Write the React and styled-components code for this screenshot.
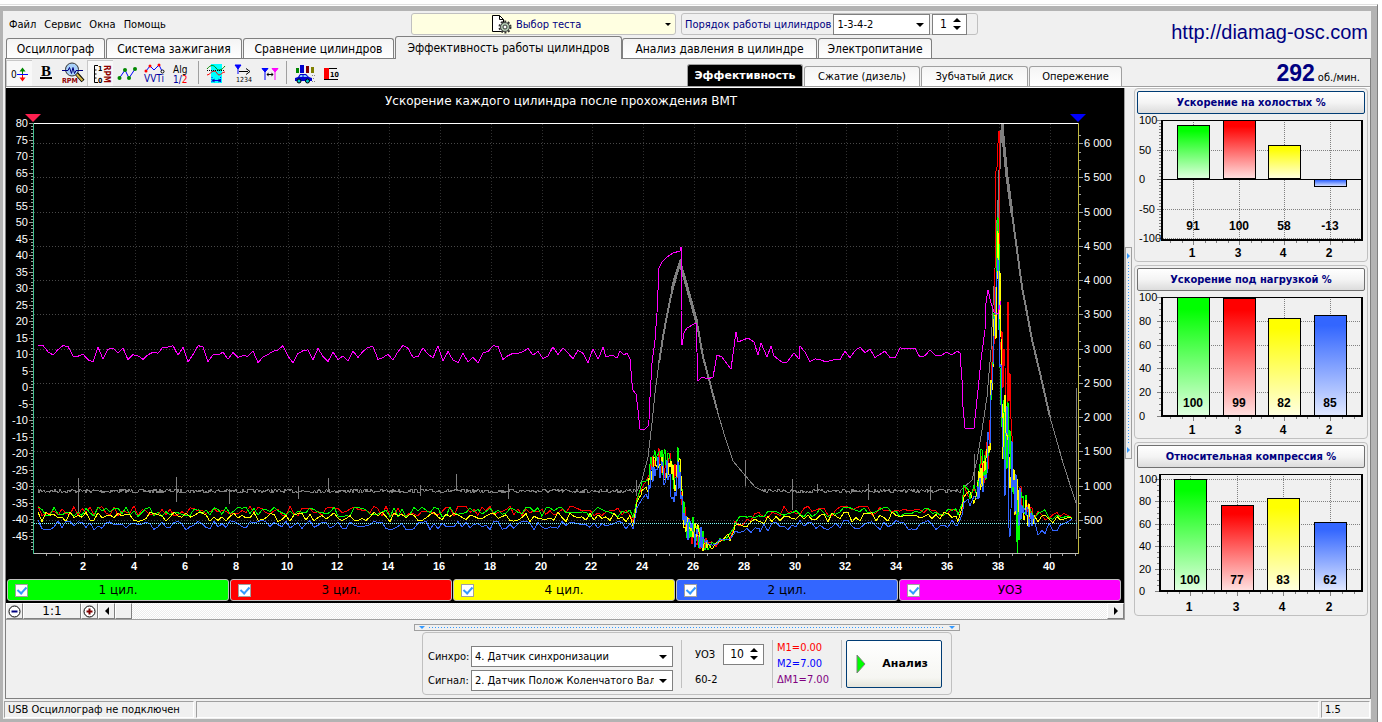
import React, { useState } from 'react';
import styled, { createGlobalStyle } from 'styled-components';

const UI_FONT = '"DejaVu Sans Condensed", "DejaVu Sans", sans-serif';
const WIDE_FONT = '"DejaVu Sans", Verdana, sans-serif';
const ARIAL = '"Liberation Sans", Arial, sans-serif';
const NAVY = '#000080';

const GREEN = '#00ff00';
const RED = '#ff0000';
const YELLOW = '#ffff00';
const BLUE = '#3366ff';
const MAGENTA = '#ff00ff';

const MENU = ['Файл', 'Сервис', 'Окна', 'Помощь'];

const TABS = [
  { label: 'Осциллограф', width: 99 },
  { label: 'Система зажигания', width: 136 },
  { label: 'Сравнение цилиндров', width: 151 },
  { label: 'Эффективность работы цилиндров', width: 227 },
  { label: 'Анализ давления в цилиндре', width: 195 },
  { label: 'Электропитание', width: 114 },
];

const SUB_TABS = [
  { label: 'Эффективность', width: 116 },
  { label: 'Сжатие (дизель)', width: 116 },
  { label: 'Зубчатый диск', width: 107 },
  { label: 'Опережение', width: 93 },
];

const CHANNELS = [
  { label: '1 цил.', color: GREEN },
  { label: '3 цил.', color: RED },
  { label: '4 цил.', color: YELLOW },
  { label: '2 цил.', color: BLUE },
  { label: 'УОЗ', color: MAGENTA },
];

const BAR_COLORS = ['green', 'red', 'yellow', 'blue'];
const CYLINDERS = [1, 3, 4, 2];

const BAR_CHARTS = [
  {
    title: 'Ускорение на холостых %',
    focused: true,
    values: [91, 100, 58, -13],
    centers: [56, 102, 147, 193],
    left: 24,
    top: 6,
    bottom: 126,
    y100: 6,
    y0: 65,
    ticks: [100, 50, 0, -50, -100],
  },
  {
    title: 'Ускорение под нагрузкой %',
    values: [100, 99, 82, 85],
    centers: [56, 102, 147, 193],
    left: 24,
    top: 6,
    bottom: 125,
    y100: 6,
    y0: 125,
    ticks: [100, 80, 60, 40, 20, 0],
  },
  {
    title: 'Относительная компрессия %',
    values: [100, 77, 83, 62],
    centers: [53, 100, 146, 193],
    left: 22,
    top: 6,
    bottom: 123,
    y100: 11,
    y0: 123,
    ticks: [100, 80, 60, 40, 20, 0],
  },
];

const GlobalStyle = createGlobalStyle`
  * {
    box-sizing: border-box;
  }
  body {
    margin: 0;
    background: #fff;
    font-family: ${UI_FONT};
    font-size: 11px;
    color: #000;
  }
  button, input, select {
    font: inherit;
    color: inherit;
    margin: 0;
    padding: 0;
  }
`;

const Page = styled.div`
  display: flex;
  flex-direction: column;
  min-height: 100vh;
  padding: 4px 4px 0 0;
`;

const Frame = styled.div`
  display: flex;
  flex-direction: column;
  flex: 1;
  margin-top: 1px;
  border-style: solid;
  border-width: 5px 6px 3px 3px;
  border-color: #b3b3b3;
  background: #f0f0f0;
`;

const Outline = styled.div`
  display: flex;
  flex-direction: column;
  flex: 1;
  border-top: 1px solid #e0e0e0;
  border-right: 1px solid #808080;
`;

const Header = styled.header`
  display: flex;
  justify-content: space-between;
  padding-left: 3px;
`;

const TopRow = styled.div`
  display: flex;
  height: 25px;
  padding-top: 2px;
`;

const MenuBar = styled.nav`
  display: flex;
  width: 405px;
  gap: 8px;
  padding-left: 3px;
`;

const MenuItem = styled.button`
  border: 0;
  background: none;
`;

const TestButton = styled.button`
  display: flex;
  align-items: center;
  width: 265px;
  height: 22px;
  padding: 0 4px 0 79px;
  border: 1px solid #c0c0c0;
  border-radius: 3px;
  background: #ffffe1;
  color: ${NAVY};
  gap: 3px;
`;

const Grow = styled.span`
  flex: 1;
  text-align: left;
`;

const OrderGroup = styled.div`
  display: flex;
  align-items: center;
  width: 297px;
  height: 22px;
  margin-left: 5px;
  padding-left: 3px;
  gap: 2px;
  border: 1px solid #c0c0c0;
  border-radius: 3px;
  color: ${NAVY};
`;

const SelectWrap = styled.div`
  position: relative;
  width: ${p => p.$width}px;
  color: #000;
  svg {
    position: absolute;
    right: 6px;
    top: 9px;
    pointer-events: none;
  }
`;

const Select = styled.select`
  display: block;
  appearance: none;
  width: 100%;
  height: 21px;
  padding: 0 18px 0 3px;
  border: 1px solid #808080;
  border-radius: 0;
  background: #fff;
  outline: 0;
  text-overflow: clip;
`;

const SpinBox = styled.div`
  display: flex;
  align-items: center;
  width: ${p => p.$width}px;
  height: 21px;
  padding-right: 5px;
  border: 1px solid #808080;
  background: #fff;
  color: #000;
`;

const SpinInput = styled.input`
  flex: 1;
  min-width: 0;
  border: 0;
  outline: 0;
  background: none;
  font-size: 12px;
  text-align: center;
`;

const SpinArrows = styled.div`
  display: flex;
  flex-direction: column;
  gap: 3px;
`;

const ArrowButton = styled.button`
  display: block;
  height: 5px;
  border: 0;
  background: none;
  line-height: 0;
`;

const SiteLink = styled.a`
  padding: 8px 3px 0 0;
  color: ${NAVY};
  font: 20px/26px ${ARIAL};
  text-decoration: none;
`;

const TabRow = styled.div`
  display: flex;
  align-items: flex-end;
  height: 22px;
`;

const Tab = styled.button`
  width: ${p => p.$width}px;
  height: ${p => (p.$active ? 23 : 20)}px;
  margin: ${p => (p.$active ? '0 0 -1px' : '0 1px 0 0')};
  border: 1px solid #808080;
  border-bottom: 0;
  border-radius: 3px 3px 0 0;
  background: ${p => (p.$active ? '#f0f0f0' : 'linear-gradient(#f4f4f4, #fff)')};
  font-family: ${UI_FONT};
  font-size: 12px;
  white-space: nowrap;
  z-index: ${p => (p.$active ? 1 : 0)};
`;

const Workspace = styled.main`
  display: flex;
  flex-direction: column;
  flex: 1;
  margin-left: 2px;
  border: 1px solid #808080;
`;

const Toolbar = styled.div`
  display: flex;
  align-items: stretch;
  height: 29px;
  border-bottom: 1px solid #fff;
  box-shadow: inset 0 -1px #a0a0a0;
`;

const ToolButton = styled.button`
  display: flex;
  align-items: center;
  justify-content: center;
  width: ${p => (p.$pressed ? 26 : 27)}px;
  height: 26px;
  margin: 1px ${p => (p.$pressed ? 1 : 0)}px 0 0;
  border: 0;
  border-top: 1px solid ${p => (p.$pressed ? '#c8c8c8' : 'transparent')};
  border-left: 1px solid ${p => (p.$pressed ? '#c8c8c8' : 'transparent')};
  background: ${p => (p.$pressed ? '#f8f8f8' : 'none')};
`;

const ToolSeparator = styled.span`
  width: 1px;
  height: 23px;
  margin: 2px 3px;
  background: #a0a0a0;
`;

const SubTabs = styled.div`
  display: flex;
  align-items: flex-end;
  gap: 1px;
  margin-left: auto;
  padding-bottom: 1px;
`;

const SubTab = styled.button`
  width: ${p => p.$width}px;
  height: ${p => (p.$active ? 22 : 20)}px;
  border: 1px solid #a0a0a0;
  border-bottom: 0;
  border-radius: 3px 3px 0 0;
  background: ${p => (p.$active ? '#000' : 'linear-gradient(#f4f4f4, #fff)')};
  color: ${p => (p.$active ? '#fff' : '#000')};
  font-family: ${p => (p.$active ? WIDE_FONT : UI_FONT)};
  font-weight: ${p => (p.$active ? 700 : 400)};
`;

const Rpm = styled.div`
  display: flex;
  align-items: baseline;
  justify-content: flex-end;
  gap: 3px;
  width: 248px;
  padding-right: 10px;
  line-height: 28px;
`;

const RpmValue = styled.strong`
  color: ${NAVY};
  font-family: ${ARIAL};
  font-size: 23px;
`;

const Body = styled.div`
  display: grid;
  grid-template-columns: minmax(0, 1fr) 9px 234px;
  padding-right: 2px;
`;

const Scope = styled.section`
  border-right: 1px solid #a0a0a0;
  border-bottom: 1px solid #a0a0a0;
  background: #000;
`;

const ChartSvg = styled.svg`
  display: block;
  width: 100%;
  height: auto;
`;

const Channels = styled.div`
  display: grid;
  grid-template-columns: repeat(5, 1fr);
  gap: 1px;
  height: 24px;
  padding: 0 3px 2px 1px;
`;

const Channel = styled.label`
  display: grid;
  grid-template-columns: 13px 1fr 13px;
  align-items: center;
  padding: 0 7px;
  border: 1px solid #c0c0c0;
  border-radius: 3px;
  background: ${p => p.$color};
  font: 12px ${WIDE_FONT};
  text-align: center;
`;

const Check = styled.input`
  appearance: none;
  display: grid;
  place-items: center;
  width: 13px;
  height: 13px;
  border: 1px solid #a0a0a0;
  background: #fff;
  &:checked::before {
    content: '';
    width: 4px;
    height: 7px;
    margin-top: -2px;
    border: solid #3399ff;
    border-width: 0 2px 2px 0;
    transform: rotate(42deg);
  }
`;

const ScrollRow = styled.div`
  display: flex;
  height: 16px;
  background: #f0f0f0;
`;

const ScrollButton = styled.button`
  display: flex;
  align-items: center;
  justify-content: center;
  width: ${p => p.$width}px;
  border: 1px solid;
  border-color: #fff #808080 #808080 #fff;
  background: #f0f0f0;
  font: 12px/14px ${WIDE_FONT};
`;

const Track = styled.div`
  flex: 1;
  background: repeating-conic-gradient(#fff 0 25%, #ececec 0 50%) 0 0 / 2px 2px;
`;

const SideHandle = styled.div`
  display: flex;
  flex-direction: column;
  align-items: center;
  justify-content: space-between;
  width: 7px;
  height: 212px;
  margin-top: 159px;
  padding: 5px 0;
  border: 1px solid #a0a0a0;
`;

const SideDots = styled.span`
  flex: 1;
  width: 1px;
  margin: 3px 0;
  background: repeating-linear-gradient(#3399ff 0 1px, transparent 1px 3px);
`;

const SideColumn = styled.aside`
  display: flex;
  flex-direction: column;
  gap: 3px;
`;

const BarPanel = styled.section`
  height: 174px;
  padding: 2px;
  border: 1px solid #c0c0c0;
  border-radius: 4px;
`;

const BarTitle = styled.button`
  display: block;
  width: 100%;
  height: 23px;
  border: 1px solid ${p => (p.$focused ? '#003c74' : '#707070')};
  border-radius: 2px;
  background: linear-gradient(#fff, #f4f4f4 50%, #dcdcdc);
  color: ${NAVY};
  font-weight: 700;
`;

const Bottom = styled.section`
  display: flex;
  flex-direction: column;
  align-items: center;
  flex: 1;
  gap: 1px;
  padding: 4px 2px 3px 0;
`;

const BottomHandle = styled.div`
  display: flex;
  align-items: center;
  width: 546px;
  height: 7px;
  padding: 0 4px;
  border: 1px solid #a0a0a0;
`;

const BottomDots = styled.span`
  flex: 1;
  height: 1px;
  margin: 0 4px;
  background: repeating-linear-gradient(90deg, #3399ff 0 1px, transparent 1px 3px);
`;

const Controls = styled.div`
  display: flex;
  align-items: center;
  height: 63px;
  padding: 0 9px 0 5px;
  border: 1px solid #c0c0c0;
  border-radius: 4px;
`;

const Sources = styled.div`
  display: grid;
  grid-template-columns: 43px 202px;
  row-gap: 3px;
  align-items: center;
  padding-top: 9px;
`;

const Divider = styled.span`
  width: 1px;
  height: 48px;
  margin: 0 ${p => p.$after}px 0 8px;
  background: #c0c0c0;
`;

const Advance = styled.div`
  display: grid;
  grid-template-columns: 28px 41px;
  grid-auto-rows: 21px;
  row-gap: 4px;
  align-items: center;
  padding-top: 6px;
`;

const Markers = styled.div`
  width: 56px;
  line-height: 16px;
`;

const Marker = styled.div`
  color: ${p => p.$color};
`;

const AnalyzeButton = styled.button`
  display: flex;
  align-items: center;
  justify-content: space-between;
  width: 96px;
  height: 48px;
  padding: 0 13px 0 9px;
  border: 1px solid #003c74;
  border-radius: 2px;
  background: linear-gradient(#fff, #f6f6f2 80%, #e4e4da);
  font-family: ${WIDE_FONT};
  font-weight: 700;
`;

const StatusBar = styled.footer`
  display: flex;
  gap: 2px;
  height: 20px;
  padding: 2px 1px 1px;
`;

const StatusCell = styled.div`
  flex: ${p => (p.$width ? `0 0 ${p.$width}px` : 1)};
  padding-left: 3px;
  border: 1px solid;
  border-color: #a0a0a0 #fff #fff #a0a0a0;
  line-height: 15px;
`;

const Triangle = ({ dir, size = 4, color = '#000' }) => {
  const s = size;
  const shapes = {
    up: [2 * s, s, `0,${s} ${s},0 ${2 * s},${s}`],
    down: [2 * s, s, `0,0 ${2 * s},0 ${s},${s}`],
    left: [s, 2 * s, `${s},0 0,${s} ${s},${2 * s}`],
    right: [s, 2 * s, `0,0 ${s},${s} 0,${2 * s}`],
  };
  const [w, h, points] = shapes[dir];
  return <svg width={w} height={h} aria-hidden="true"><polygon points={points} fill={color} /></svg>;
};

const Spin = ({ label, width, initial }) => {
  const [value, setValue] = useState(initial);
  return <SpinBox $width={width}>
    <SpinInput aria-label={label} value={value} onChange={e => setValue(Number(e.target.value) || 0)} />
    <SpinArrows>
      <ArrowButton aria-label={`${label} +`} onClick={() => setValue(value + 1)}><Triangle dir="up" /></ArrowButton>
      <ArrowButton aria-label={`${label} -`} onClick={() => setValue(value - 1)}><Triangle dir="down" /></ArrowButton>
    </SpinArrows>
  </SpinBox>;
};

const DropDown = ({ id, width, options }) => <SelectWrap $width={width}>
  <Select id={id}>
    {options.map(o => <option key={o}>{o}</option>)}
  </Select>
  <Triangle dir="down" />
</SelectWrap>;

/* toolbar drawings, each on a 24x24 canvas */
const ICONS = {
  zero: <>
    <text x="3" y="16" fontSize="10">0</text>
    <path d="M9 12.500h11" stroke="#00f" />
    <path d="M14.500 12V8" stroke="#080" /><path d="M11.500 9.500l3-4 3 4z" fill="#080" />
    <path d="M14.500 13v4" stroke="#f00" /><path d="M11.500 15.500l3 4 3-4z" fill="#f00" />
  </>,
  bold: <>
    <text x="11" y="14" fontSize="15" fontWeight="700" textAnchor="middle" fontFamily="Liberation Serif, serif">B</text>
    <path d="M5 16h12" stroke="#000" strokeWidth="2" />
  </>,
  zoomRpm: <>
    <path d="M14 11l7 8" stroke="#000" strokeWidth="4" />
    <path d="M14.500 12l6 6.500" stroke="#d8b848" strokeWidth="2" />
    <circle cx="10" cy="7.500" r="6.500" fill="#a8d0f8" stroke="#333" />
    <path d="M0 8.500h6l1.500-3 2 6 1.500-6 1.500 6 1.500-3H21" stroke="#000080" fill="none" />
    <text x="0" y="21" fontSize="7" fill="#900000" fontWeight="700">RPM</text>
  </>,
  rpmAxis: <>
    <path d="M9 3.500H5.500v17H9M5.500 8h2M5.500 12h2M5.500 16h2" stroke="#000" fill="none" />
    <text x="9" y="9" fontSize="7" fontWeight="700">1</text>
    <text x="9" y="21" fontSize="7" fontWeight="700">0</text>
    <text x="3" y="-15" fontSize="8" fill="#900000" fontWeight="700" transform="rotate(90)">RPM</text>
  </>,
  points: <>
    <path d="M3.500 16L9 8l4 8 6-9" stroke="#00f" fill="none" />
    {[[3.5, 16], [9, 8], [13, 16], [19, 7]].map(([x, y]) => <circle key={x} cx={x} cy={y} r="2" fill="#080" />)}
  </>,
  vvti: <>
    <path d="M3 9l4-5 4 4 5-5 3 6" stroke="#00f" fill="none" />
    <circle cx="3" cy="9" r="1.500" fill="#f00" /><circle cx="7" cy="4" r="1.500" fill="#f00" />
    <circle cx="16" cy="3" r="1.500" fill="#f00" /><circle cx="19.500" cy="9.500" r="1.500" fill="#fff" stroke="#000" />
    <text x="1" y="20" fontSize="10" fill="#0000a0">VVTi</text>
  </>,
  alg: <>
    <text x="3" y="11" fontSize="10">Alg</text>
    <text x="3" y="21" fontSize="10" fill="#0000a0">1/<tspan fill="#f00">2</tspan></text>
  </>,
  overlap: <>
    <rect x="7" y="2" width="11" height="19" fill="#0ff" />
    <path d="M3 7c4-5 7-4 9-1s5 3 9-2" stroke="#080" fill="none" />
    <path d="M3 13c3 0 4-4 7-4s3 4 5 4 3-3 6-3" stroke="#f00" fill="none" />
    <path d="M3 8.500h18" stroke="#000" strokeDasharray="1 1" />
    <path d="M8 15v6M16.500 15v6" stroke="#00f" strokeDasharray="1 1" />
    <path d="M8.500 18.500h8" stroke="#00f" /><path d="M8 18.500l2.500-2v4zM17 18.500l-2.500-2v4z" fill="#00a" />
  </>,
  markCount: <>
    <path d="M4 3h6L7 7z" fill="#00f" stroke="#00f" /><path d="M7 5v7" stroke="#00f" />
    <path d="M8 9.500h9" stroke="#000" /><path d="M15 6.500l4 3-4 3" stroke="#000" fill="none" />
    <text x="5" y="20" fontSize="7">1234</text>
  </>,
  markPair: <>
    <path d="M4 6.500h6L7 10z" fill="#00f" stroke="#00f" /><path d="M7 7v11" stroke="#00f" />
    <path d="M14 6.500h6L17 10z" fill="#f0f" stroke="#f0f" /><path d="M17 7v11" stroke="#f0f" />
    <path d="M9 12.500h6" stroke="#000" /><path d="M8.500 12.500l2-2v4zM15.500 12.500l-2-2v4z" fill="#000" />
  </>,
  car: <>
    <rect x="4" y="6" width="3" height="5" fill="#080" /><rect x="8" y="3" width="4" height="8" fill="#00c" />
    <rect x="14" y="4" width="3" height="7" fill="#800000" /><rect x="19" y="5" width="3" height="6" fill="#808000" />
    <path d="M3 16l3-1 2-3h6l3 3 3 1v3H3z" fill="#0000d0" />
    <path d="M8.500 13h2v2h-3zM11.500 13h2l2 2h-4z" fill="#8cf" />
    <circle cx="7" cy="19" r="2" fill="#0cc" stroke="#000" /><circle cx="15.500" cy="19" r="2" fill="#0cc" stroke="#000" />
    <path d="M20 13.500h3M21 16.500h2M20 19.500h3" stroke="#888" strokeDasharray="1 1" />
  </>,
  ten: <>
    <path d="M5 6.500h13M5 17.500h14" stroke="#000" />
    <rect x="5" y="6" width="5" height="11" fill="#f00" />
    <text x="11" y="15" fontSize="7" fontWeight="700">10</text>
  </>,
};

const TOOLS = [
  ['zero', 'Нулевая линия', true], ['bold', 'Толщина линии'], ['zoomRpm', 'Масштаб RPM'], ['rpmAxis', 'Ось RPM', true],
  ['points', 'Точки'], ['vvti', 'VVTi'], ['alg', 'Алгоритм'], null,
  ['overlap', 'Наложение'], ['markCount', 'Счёт меток'], ['markPair', 'Метки'], null,
  ['car', 'Автомобиль'], ['ten', 'Десять'],
];

const TestIcon = () => <svg width="22" height="20" viewBox="0 0 22 20" aria-hidden="true">
  <path d="M1.500 1.500h7l4 4v12h-11z" fill="#fff" stroke="#000" />
  <path d="M8.500 1.500v4h4" fill="none" stroke="#000" />
  <circle cx="14" cy="13" r="5.500" fill="none" stroke="#333" strokeWidth="2" strokeDasharray="2 1.500" />
  <circle cx="14" cy="13" r="4.500" fill="#b0c8b0" stroke="#444" />
  <circle cx="14" cy="13" r="2" fill="#fff" stroke="#333" />
</svg>;

const makeRandom = seed => {
  let s = seed;
  return () => {
    s = (s * 16807) % 2147483647;
    return s / 2147483647;
  };
};

/* walks along [x, y, spread] nodes and jitters every sample inside the spread */
const trace = (nodes, seed, step = 4) => {
  const random = makeRandom(seed);
  const out = [];
  for (let i = 0; i < nodes.length - 1; i++) {
    const [x0, y0, a0] = nodes[i];
    const [x1, y1, a1] = nodes[i + 1];
    const d = a0 > 9 || a1 > 9 ? 1 : step;
    for (let x = x0; x < x1; x += d) {
      const k = (x - x0) / (x1 - x0);
      const y = y0 + (y1 - y0) * k + (random() * 2 - 1) * (a0 + (a1 - a0) * k);
      out.push(`${x.toFixed(1)},${Math.min(552, Math.max(124, y)).toFixed(1)}`);
    }
  }
  return out.join(' ');
};

const cylinderNodes = (base, shift, peak, late) => [
  [38, base, 5], [630, base, 5], [633, 522 + shift, 4], [637, 500 + shift, 4], [642, 488 + shift, 4],
  [648, 484 + shift, 8], [651, 470 + shift, 12], [658, 458 + shift, 12], [663, 465 + shift, 14], [669, 466 + shift, 16],
  [674, 478 + shift, 16], [679, 462 + shift, 18], [681, 485 + shift, 15], [683, 510, 14], [687, 528, 12],
  [695, 532, 16], [702, 540, 12], [708, 547, 5], [720, 542, 4], [730, 537, 4],
  [735, 524 + shift, 4], [760, base + 4, 4], [780, base, 5], [958, base, 5],
  [962, 510 + shift, 8], [964, 494 + shift, 9], [970, 498 + shift, 9], [977, 492 + shift, 9],
  [981, 472 + shift, 20], [986, 462 + shift, 22], [990, 430, 28], [992, 370, 26],
  [994, 320, 30], [996, peak + 70, 40], [998, peak + 10, 10], [999, peak + 50, 50], [1000, 320, 60], [1002, late, 40],
  [1004, late + 20, 60], [1006, late + 30, 60], [1008, late + 20, 60], [1010, late + 60, 40], [1012, 470, 35], [1015, 500, 30],
  [1018, 515, 34], [1021, 500, 22], [1028, 515, 18], [1031, 515, 10], [1034, base + 3, 9], [1045, base + 3, 6], [1060, base + 3, 3], [1073, 518, 0],
];

const CYLINDER_TRACES = [
  { color: RED, points: trace(cylinderNodes(511, 0, 130, 340), 91) },
  { color: GREEN, points: trace(cylinderNodes(512, -3, 200, 390), 17) },
  { color: YELLOW, points: trace(cylinderNodes(517, 1, 230, 410), 53) },
  { color: BLUE, points: trace(cylinderNodes(525, 10, 250, 440), 37) },
];

const RPM_FLAT_1 = trace([[38, 491, 2], [637, 491, 2], [638, 490, 0]], 7, 1);
const RPM_FLAT_2 = trace([[762, 491, 2], [960, 491, 2], [962, 490, 0]], 9, 1);
const RPM_CURVES = [
  [1, '637,491 642,480 648,457 652,423 655,393 659,363'],
  [2, '659,363 663,337 668,310 673,287'],
  [3, '672,290 676,275 680,263 685,280'],
  [3, '685,280 690,298 697,323'],
  [2, '697,323 703,357 710,383 717,410'],
  [1, '717,410 725,437 733,461 743,473 755,487 763,491'],
  [1, '960,491 972,480 977,460 982,430 987,397 991,350'],
  [1, '991,350 993,305 996,250'],
  [2, '996,250 999,190 1000,150 1002,124'],
  [3, '1002,124 1004,147 1007,177 1012,213'],
  [2, '1012,213 1017,250 1022,287 1027,313'],
  [2, '1027,313 1032,340 1040,373 1050,417'],
  [1, '1050,417 1063,463 1076,503'],
];
const RPM_SPIKES = [
  [78, 478, 512], [176, 477, 502], [229, 489, 504], [298, 486, 499], [328, 478, 491], [420, 485, 496], [508, 484, 499],
  [456, 474, 491], [636, 480, 496], [745, 460, 486], [792, 479, 510], [817, 484, 493], [868, 484, 500],
  [930, 486, 500], [974, 454, 490],
];

const ADVANCE = [
  trace([[38, 354, 9], [600, 354, 9]], 23, 5),
  '600,355 603,347 606,357 612,355 617,358 620,351 624,355 627,353 630,359 632,383 633,390 636,394 638,410 640,429 645,429 648,426 649,420 650,397 652,363 655,340 657,313 659,268 662,262 667,257 673,253 680,251 681,247 681,310 682,345 684,333 687,328 696,323 698,381 702,377 708,379 713,377 717,355 722,357 731,369 734,347 736,332 738,342 748,338 754,342 758,355 761,343 767,357 771,346 774,356 782,362 787,362 794,353 799,359',
  trace([[800, 354, 8], [930, 354, 8]], 41, 5),
  '930,350 935,355 941,356 946,352 952,355 957,351 960,353 962,380 963,407 965,428 974,428 978,390 981,360 985,330 986,303 988,290 991,303 994,312 998,314 1001,301',
].join(' ');

const X_TICKS = Array.from({ length: 20 }, (_, i) => ({ label: (i + 1) * 2, x: Math.round(33.5 + 50.8 * (i + 1)) }));
const Y_TICKS = Array.from({ length: 26 }, (_, i) => ({ label: 80 - i * 5, y: Math.round(123 + i * 16.52) }));
const RPM_TICKS = Array.from({ length: 12 }, (_, i) => {
  const rpm = 6000 - i * 500;
  return {
    label: rpm < 1000 ? `${rpm}` : `${Math.floor(rpm / 1000)} ${String(rpm % 1000).padStart(3, '0')}`,
    y: Math.round(143 + i * 34.27),
  };
});

const ScopeChart = () => <ChartSvg viewBox="6 88 1118 491" role="img" aria-label="Ускорение каждого цилиндра">
  <text x="385" y="105" fontSize="12" fill="#fff" fontFamily={WIDE_FONT}>Ускорение каждого цилиндра после прохождения ВМТ</text>
  <g shapeRendering="crispEdges" stroke="#484848" strokeDasharray="1 2">
    {RPM_TICKS.map(t => <path key={t.y} d={`M34 ${t.y + 0.5}H1078`} />)}
    {X_TICKS.map(t => <path key={t.x} d={`M${t.x + 0.5} 124V553`} stroke="#303030" />)}
  </g>
  <g fill="none" shapeRendering="crispEdges" strokeWidth="1">
    <polyline points={RPM_FLAT_1} stroke="#808080" />
    <polyline points={RPM_FLAT_2} stroke="#808080" />
    {RPM_CURVES.map(([w, points]) => <polyline key={points} points={points} stroke="#808080" strokeWidth={w} />)}
    {RPM_SPIKES.map(([x, a, b]) => <path key={x} d={`M${x + 0.5} ${a}V${b}`} stroke="#808080" />)}
    <path d="M1076.500 388V539" stroke="#808080" />
    {CYLINDER_TRACES.map(t => <polyline key={t.color} points={t.points} stroke={t.color} />)}
    <path d="M1017.500 500V553" stroke={GREEN} />
    <polyline points={ADVANCE} stroke={MAGENTA} />
    <path d="M34 523.500H1078" stroke="#80ffff" strokeDasharray="1 1" />
  </g>
  <g shapeRendering="crispEdges" fill="none">
    <path d="M33 123.500H1079" stroke="#fff" />
    <path d="M33 553.500H1079" stroke="#c0c0c0" />
    <path d="M33.500 123V554" stroke="#40c090" />
    <path d="M1078.500 123V554" stroke="#c0b840" />
    {Y_TICKS.map(t => <path key={t.y} d={`M29 ${t.y + 0.5}h4M31 ${t.y + 3.5}h2M31 ${t.y + 6.5}h2M31 ${t.y + 10.5}h2M31 ${t.y + 13.5}h2`} stroke="#a0a0a0" />)}
    {X_TICKS.map(t => <path key={t.x} d={`M${t.x + 0.5} 554v4M${t.x - 37.5} 554v2M${t.x - 24.5} 554v2M${t.x - 12.5} 554v2`} stroke="#a0a0a0" />)}
    <path d="M1062.500 554v2M1075.500 554v2" stroke="#a0a0a0" />
    {RPM_TICKS.map(t => <path key={t.y} d={`M1079 ${t.y + 0.5}h4M1079 ${t.y - 7.5}h2M1079 ${t.y + 9.5}h2M1079 ${t.y + 17.5}h2`} stroke="#a0a0a0" />)}
  </g>
  <path d="M25 114h16l-8 8z" fill="#ff2050" />
  <path d="M1070 114h16l-8 8z" fill="#0000ff" />
  <g fill="#fff" fontFamily={ARIAL} fontSize="11">
    {Y_TICKS.map(t => <text key={t.y} x="28" y={t.y + 4} textAnchor="end">{t.label}</text>)}
    {RPM_TICKS.map(t => <text key={t.y} x="1084" y={t.y + 4}>{t.label}</text>)}
  </g>
  <g fill="#fff" fontFamily={ARIAL} fontSize="11" fontWeight="700" textAnchor="middle">
    {X_TICKS.map(t => <text key={t.x} x={t.x - 1} y="570">{t.label}</text>)}
  </g>
</ChartSvg>;

const BarChart = ({ title, focused, values, centers, left, top, bottom, y100, y0, ticks }) => {
  const toY = v => Math.round(y0 - (y0 - y100) * v / 100);
  const minor = [];
  for (let y = y100; y < bottom; y += (y0 - y100) / 20) {
    minor.push(Math.round(y));
  }
  return <BarPanel>
    <BarTitle $focused={focused}>{title}</BarTitle>
    <ChartSvg viewBox="0 0 228 145" role="img" aria-label={title}>
      <g shapeRendering="crispEdges">
        {ticks.map(t => <path key={t} d={`M${left} ${toY(t) + 0.5}H225`} stroke="#808080" strokeDasharray="1 1" />)}
        {centers.map(x => <path key={x} d={`M${x + 0.5} ${top}V${bottom}`} stroke="#808080" strokeDasharray="1 1" />)}
        {ticks.map(t => <path key={t} d={`M${left - 4} ${toY(t) + 0.5}h4`} stroke="#808080" />)}
        {minor.map((y, i) => <path key={i} d={`M${left - 2} ${y + 0.5}h2`} stroke="#808080" />)}
        {centers.map(x => <path key={x} d={`M${x + 0.5} ${bottom + 1}v4M${x - 22.5} ${bottom + 1}v2M${x - 10.5} ${bottom + 1}v2M${x + 12.5} ${bottom + 1}v2`} stroke="#808080" />)}
        <path d={`M${centers[3] + 24.5} ${bottom + 1}v2`} stroke="#808080" />
        {y0 < bottom && <path d={`M${left} ${y0 + 0.5}H225`} stroke="#000" />}
        {values.map((v, i) => <rect
          key={BAR_COLORS[i]}
          x={centers[i] - 16 + 0.5}
          y={Math.min(toY(v), y0) + 0.5}
          width="32"
          height={Math.abs(toY(v) - y0) - 1}
          fill={`url(#bar-${BAR_COLORS[i]})`}
          stroke="#000"
        />)}
        <path d={`M${left} ${top + 0.5}H225`} stroke="#000" fill="none" />
        <path d={`M${left + 0.5} ${top}V${bottom}H225V${top}`} stroke="#000" strokeWidth="2" fill="none" />
      </g>
      <g fontFamily={ARIAL} fontSize="11">
        {ticks.map(t => <text key={t} x="2" y={toY(t) + 4}>{t}</text>)}
      </g>
      <g fontFamily={ARIAL} fontSize="12" fontWeight="700" textAnchor="middle">
        {values.map((v, i) => <text key={centers[i]} x={centers[i]} y="116">{v}</text>)}
        {CYLINDERS.map((c, i) => <text key={c} x={centers[i] - 1} y="143">{c}</text>)}
      </g>
    </ChartSvg>
  </BarPanel>;
};

const GRADIENTS = [['green', GREEN, '#e0ffe0'], ['red', RED, '#ffe0e0'], ['yellow', YELLOW, '#ffffe0'], ['blue', BLUE, '#e0e8ff']];

const HiddenSvg = styled.svg`
  position: absolute;
`;

const Gradients = () => <HiddenSvg width="0" height="0" aria-hidden="true">
  <defs>
    {GRADIENTS.map(([name, from, to]) => <linearGradient key={name} id={`bar-${name}`} x1="0" y1="0" x2="0" y2="1">
      <stop offset="0.1" stopColor={from} />
      <stop offset="1" stopColor={to} />
    </linearGradient>)}
  </defs>
</HiddenSvg>;

const App = () => {
  const [tab, setTab] = useState(3);
  const [subTab, setSubTab] = useState(0);
  return <Page>
    <GlobalStyle />
    <Gradients />
    <Outline>
      <Frame>
        <Header>
          <div>
            <TopRow>
              <MenuBar>
                {MENU.map(m => <MenuItem key={m}>{m}</MenuItem>)}
              </MenuBar>
              <TestButton>
                <TestIcon />
                <Grow>Выбор теста</Grow>
                <Triangle dir="down" size={3} />
              </TestButton>
              <OrderGroup>
                <label htmlFor="order">Порядок работы цилиндров</label>
                <DropDown id="order" width={97} options={['1-3-4-2', '1-2-4-3']} />
                <Spin label="Цилиндр" width={35} initial={1} />
              </OrderGroup>
            </TopRow>
            <TabRow>
              {TABS.map((t, i) => <Tab key={t.label} $width={t.width} $active={i === tab} onClick={() => setTab(i)}>{t.label}</Tab>)}
            </TabRow>
          </div>
          <SiteLink href="http://diamag-osc.com">http://diamag-osc.com</SiteLink>
        </Header>
        <Workspace>
          <Toolbar>
            {TOOLS.map((t, i) => t
              ? <ToolButton key={t[0]} aria-label={t[1]} $pressed={t[2]}>
                <svg width="24" height="24" viewBox="0 0 24 24">{ICONS[t[0]]}</svg>
              </ToolButton>
              : <ToolSeparator key={i} />)}
            <SubTabs>
              {SUB_TABS.map((t, i) => <SubTab key={t.label} $width={t.width} $active={i === subTab} onClick={() => setSubTab(i)}>{t.label}</SubTab>)}
            </SubTabs>
            <Rpm><RpmValue>292</RpmValue>об./мин.</Rpm>
          </Toolbar>
          <Body>
            <Scope>
              <ScopeChart />
              <Channels>
                {CHANNELS.map(c => <Channel key={c.label} $color={c.color}>
                  <Check type="checkbox" defaultChecked />
                  {c.label}
                </Channel>)}
              </Channels>
              <ScrollRow>
                <ScrollButton $width={17} aria-label="Уменьшить">
                  <svg width="13" height="13"><circle cx="6.500" cy="6.500" r="5.500" fill="#fff" stroke="#000" /><path d="M3.500 6.500h6" stroke="#000080" strokeWidth="2" /></svg>
                </ScrollButton>
                <ScrollButton $width={58}>1:1</ScrollButton>
                <ScrollButton $width={17} aria-label="Увеличить">
                  <svg width="13" height="13"><circle cx="6.500" cy="6.500" r="5.500" fill="#fff" stroke="#000" /><path d="M3.500 6.500h6M6.500 3.500v6" stroke="#800000" strokeWidth="2" /></svg>
                </ScrollButton>
                <ScrollButton $width={17} aria-label="Влево"><Triangle dir="left" /></ScrollButton>
                <ScrollButton $width={17} aria-label="Прокрутка" />
                <Track />
                <ScrollButton $width={17} aria-label="Вправо"><Triangle dir="right" /></ScrollButton>
              </ScrollRow>
            </Scope>
            <SideHandle>
              <Triangle dir="right" size={3} color="#3399ff" />
              <SideDots />
              <Triangle dir="right" size={3} color="#3399ff" />
            </SideHandle>
            <SideColumn>
              {BAR_CHARTS.map(c => <BarChart key={c.title} {...c} />)}
            </SideColumn>
          </Body>
          <Bottom>
            <BottomHandle>
              <Triangle dir="down" size={3} color="#3399ff" />
              <BottomDots />
              <Triangle dir="down" size={3} color="#3399ff" />
            </BottomHandle>
            <Controls>
              <Sources>
                <label htmlFor="sync">Синхро:</label>
                <DropDown id="sync" width={202} options={['4.  Датчик синхронизации']} />
                <label htmlFor="signal">Сигнал:</label>
                <DropDown id="signal" width={202} options={['2.  Датчик Полож Коленчатого Вала']} />
              </Sources>
              <Divider $after={13} />
              <Advance>
                <span>УОЗ</span>
                <Spin label="УОЗ" width={41} initial={10} />
                <span>60-2</span>
              </Advance>
              <Divider $after={4} />
              <Markers>
                <Marker $color="#ff0000">M1=0.00</Marker>
                <Marker $color="#0000ff">M2=7.00</Marker>
                <Marker $color="#800080">ΔM1=7.00</Marker>
              </Markers>
              <Divider $after={4} />
              <AnalyzeButton>
                <svg width="10" height="20" aria-hidden="true"><path d="M1 1l8 9-8 9z" fill={GREEN} stroke="#808080" /></svg>
                Анализ
              </AnalyzeButton>
            </Controls>
          </Bottom>
        </Workspace>
        <StatusBar>
          <StatusCell $width={190}>USB Осциллограф не подключен</StatusCell>
          <StatusCell />
          <StatusCell $width={49}>1.5</StatusCell>
        </StatusBar>
      </Frame>
    </Outline>
  </Page>;
};

export default App;
